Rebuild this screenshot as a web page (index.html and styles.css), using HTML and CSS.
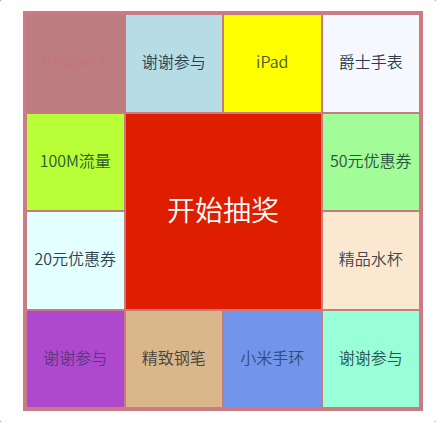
FILE: index.html
```html
<!DOCTYPE html>
<html lang="zh-CN">
<head>
<meta charset="utf-8">
<title>抽奖</title>
<link rel="stylesheet" href="styles.css">
</head>
<body>
<main class="board">
  <div class="prize rose">iPhone X</div>
  <div class="prize powder">谢谢参与</div>
  <div class="prize yellow">iPad</div>
  <div class="prize ghost">爵士手表</div>
  <div class="prize lime">100M流量</div>
  <button class="start" type="button">开始抽奖</button>
  <div class="prize green">50元优惠券</div>
  <div class="prize ice">20元优惠券</div>
  <div class="prize cream">精品水杯</div>
  <div class="prize purple">谢谢参与</div>
  <div class="prize tan">精致钢笔</div>
  <div class="prize blue">小米手环</div>
  <div class="prize mint">谢谢参与</div>
</main>
</body>
</html>
```
FILE: styles.css
```css
* {
  box-sizing: border-box;
}

html {
  background: #8a8a78;
}

body {
  min-height: 100vh;
  margin: 0;
  padding: 11px 13px 11px 23px;
  border-radius: 2px;
  background: #fefefe;
  color: #2c3e50;
  font-family: "Noto Sans CJK SC", sans-serif;
  font-size: 16px;
  font-weight: 350;
  line-height: 24px;
}

.board {
  display: grid;
  grid-template-columns: repeat(4, minmax(0, 1fr));
  grid-template-rows: repeat(4, minmax(0, 1fr));
  gap: 2px;
  aspect-ratio: 1;
  border: 4px solid #cb7b84;
  background: #c87b7e;
}

.prize {
  display: flex;
  align-items: center;
  justify-content: center;
  padding-bottom: 4px;
  white-space: nowrap;
}

.start {
  grid-column: 2 / span 2;
  grid-row: 2 / span 2;
  padding: 0 0 4px;
  border: 0;
  background: #df1e00;
  color: #fff;
  font: inherit;
  font-size: 28px;
  line-height: 40px;
  cursor: pointer;
}

.rose { background: #bd7b82; color: #c5757c; }
.powder { background: #b6dce5; }
.yellow { background: #ffff00; color: #4c5930; }
.ghost { background: #f5f8ff; }
.lime { background: #b8ff37; color: #2c5a30; }
.green { background: #a2fc98; color: #2c5240; }
.ice { background: #e4ffff; }
.cream { background: #fbe8d0; color: #43464c; }
.purple { background: #ae48cc; color: #5c3684; }
.tan { background: #d9b78b; color: #46443f; }
.blue { background: #7195ea; color: #344b78; }
.mint { background: #99ffd9; color: #2c5250; }
```
